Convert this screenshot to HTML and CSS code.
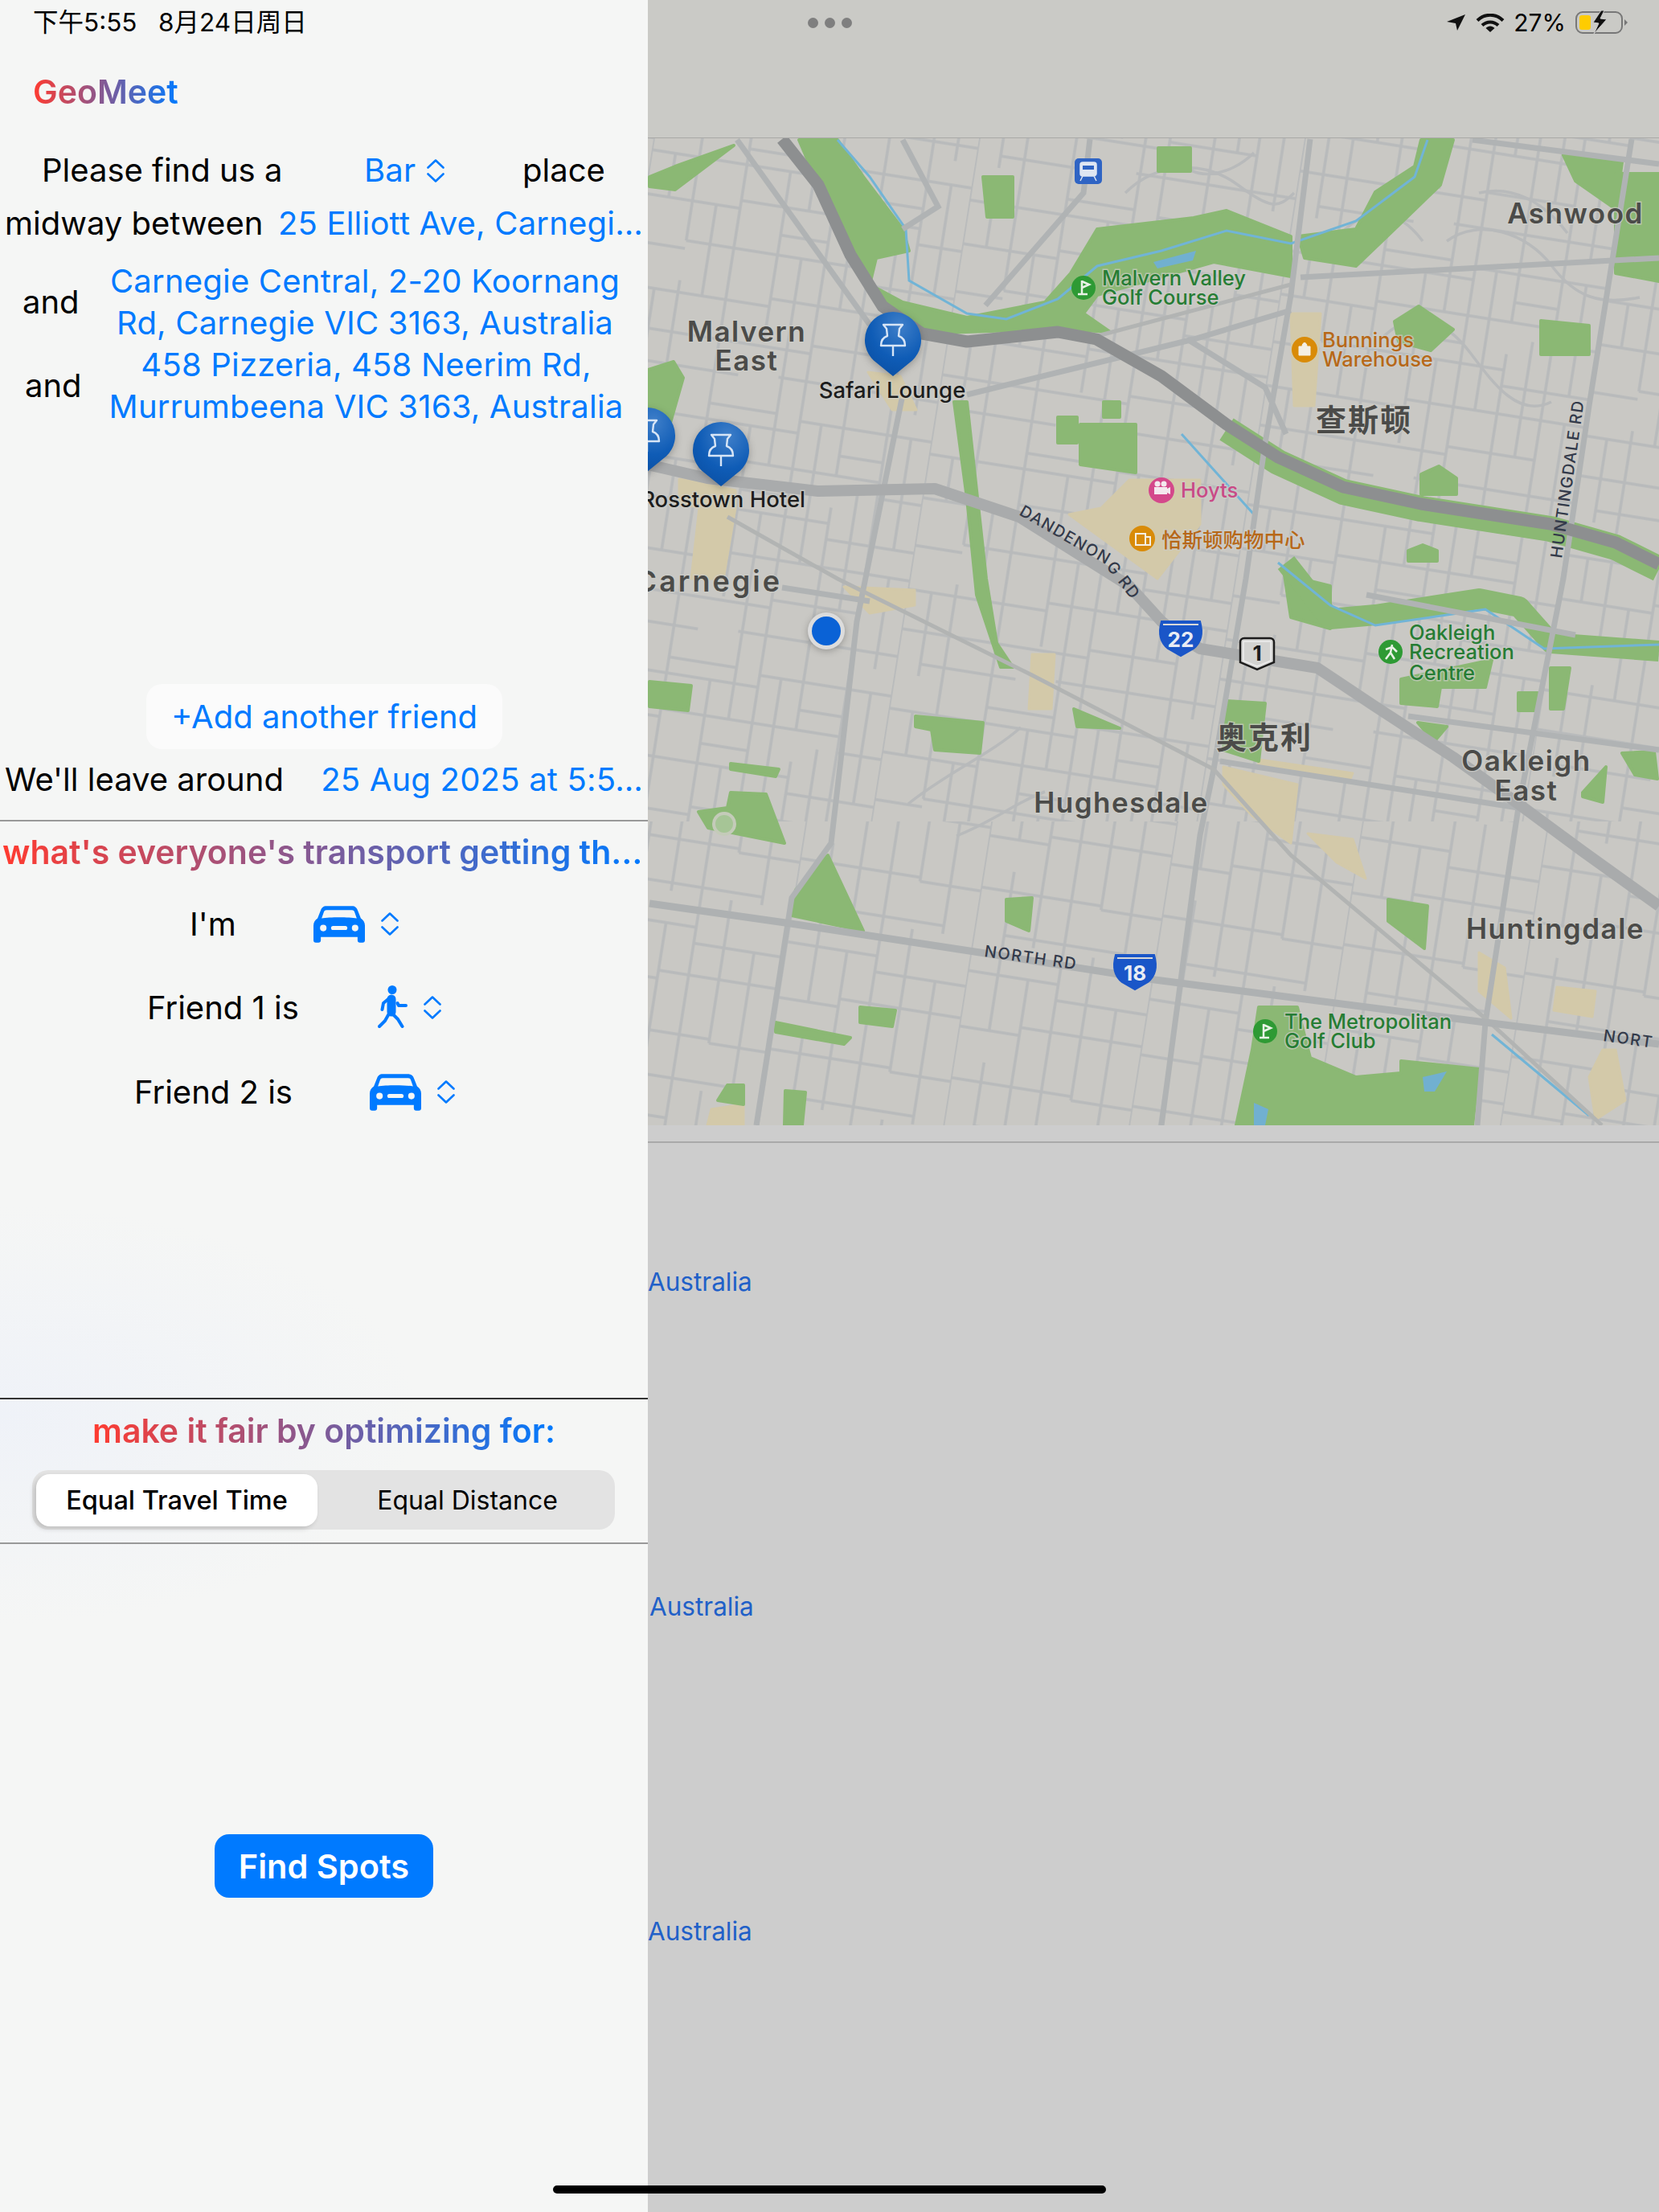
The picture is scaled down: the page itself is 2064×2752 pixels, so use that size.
FILE: index.html
```html
<!DOCTYPE html>
<html lang="en">
<head>
    <meta charset="UTF-8">
    <meta name="viewport" content="width=device-width, initial-scale=1.0">
    <title>GeoMeet</title>
    <link rel="stylesheet" href="styles.css">
</head>
<body>
    <svg class="sprites" width="0" height="0">
        <defs>
            <radialGradient id="pin-fill" cx="0.62" cy="0.22" r="0.85">
                <stop offset="0" stop-color="#3f7fc9"/>
                <stop offset="0.6" stop-color="#0f5cb6"/>
                <stop offset="1" stop-color="#0a4fa3"/>
            </radialGradient>
            <pattern id="street-tile" width="400" height="320" patternUnits="userSpaceOnUse" patternTransform="rotate(9) translate(30 12)">
                <path class="street" d="M0 0V320M120 0V320M235 0V320M345 0V320M60 0V150M60 200V320M175 45V260M290 0V90M290 130V320M30 45V100M30 215V320M90 100V215M205 0V90M205 150V320M262 30V205M320 110V255M375 30V170M375 205V320M0 45H235M235 30H400M0 100H120M120 90H345M345 110H400M0 160H60M60 150H290M290 170H400M0 215H175M175 205H400M0 265H235M235 255H345M30 305H150M200 300H400M120 25H205M290 65H345M175 125H235"/>
            </pattern>
            <pattern id="street-tile-south" width="228" height="240" patternUnits="userSpaceOnUse" patternTransform="rotate(9) translate(10 4)">
                <path class="street" d="M0 0V240M38 0V110M38 150V240M76 40V240M114 0V240M152 0V180M190 60V240M0 40H114M114 60H228M0 110H76M76 100H228M0 175H152M152 180H228M38 230H190"/>
            </pattern>
            <symbol id="chevrons" viewBox="0 0 22 29">
                <path d="M1.5 10.5 11 1.5l9.5 9M1.5 18.5l9.5 9 9.5-9" fill="none" stroke="#007aff" stroke-width="2.6" stroke-linecap="round" stroke-linejoin="round"/>
            </symbol>
            <symbol id="car" viewBox="0 0 63 46">
                <path fill="#007aff" fill-rule="evenodd" d="M16 1H47C51 1 53 3 54 6L58 16C61 18 63 21 63 25V43C63 45 62 46 60 46H57C55 46 54 45 54 43V39H9V43C9 45 8 46 6 46H3C1 46 0 45 0 43V25C0 21 2 18 5 16L9 6C10 3 12 1 16 1ZM16 6C14 6 13 7 12.500 9L10 16C20 14.500 43 14.500 53 16L50.500 9C50 7 49 6 47 6ZM12 24A4 4 0 1 0 12 32A4 4 0 1 0 12 24ZM51 24A4 4 0 1 0 51 32A4 4 0 1 0 51 24ZM24 25.500A2.500 2.500 0 0 0 24 30.500H39A2.500 2.500 0 0 0 39 25.500Z"/>
            </symbol>
            <symbol id="walk" viewBox="0 0 37 54">
                <circle cx="18" cy="5.500" r="5.500" fill="#007aff"/>
                <path d="M17 17V33" stroke="#007aff" stroke-width="11" stroke-linecap="round"/>
                <path d="M13 17 7 22 5.500 30M24.500 22 26 25H35M14 35 9 44 2 51M19 36 25 42 30.500 51" fill="none" stroke="#007aff" stroke-width="4" stroke-linecap="round" stroke-linejoin="round"/>
            </symbol>
            <symbol id="pin" viewBox="-40 -40 80 90" overflow="visible">
                <path fill="url(#pin-fill)" d="M0-35A35 35 0 0 1 24 25.500L0 45-24 25.500A35 35 0 0 1 0-35Z"/>
                <path fill="none" stroke="#d7e5f6" stroke-width="2.400" stroke-linejoin="round" d="M-12-19H12L8-14 7-5C13-3 15 2 15 7H-15C-15 2-13-3-7-5L-8-14ZM0 7V20"/>
            </symbol>
        </defs>
    </svg>

    <div class="screen">
        <aside class="sidebar">
            <div class="status-time">下午5:55&nbsp;&nbsp;&nbsp;8月24日周日</div>
            <h1 class="app-title"><span class="grad">GeoMeet</span></h1>

            <div class="row row-find">
                <span class="find-label">Please find us a</span>
                <span class="link find-pick">Bar <svg class="chev"><use href="#chevrons"/></svg></span>
                <span class="find-place">place</span>
            </div>
            <div class="row row-midway">
                <span>midway between</span>
                <span class="link">25 Elliott Ave, Carnegi…</span>
            </div>
            <div class="row row-friend row-friend-a">
                <span class="and">and</span>
                <span class="link addr">Carnegie Central, 2-20 Koornang<br>Rd, Carnegie VIC 3163, Australia</span>
            </div>
            <div class="row row-friend row-friend-b">
                <span class="and">and</span>
                <span class="link addr">458 Pizzeria, 458 Neerim Rd,<br>Murrumbeena VIC 3163, Australia</span>
            </div>

            <button class="add-friend">+Add another friend</button>

            <div class="row row-leave">
                <span>We'll leave around</span>
                <span class="link">25 Aug 2025 at 5:5…</span>
            </div>

            <hr class="rule rule-top">
            <h2 class="transport-title"><span class="grad">what's everyone's transport getting th…</span></h2>

            <div class="mode mode-me">
                <span class="mode-label">I'm</span>
                <svg class="icon-car"><use href="#car"/></svg>
                <svg class="chev"><use href="#chevrons"/></svg>
            </div>
            <div class="mode mode-one">
                <span class="mode-label">Friend 1 is</span>
                <svg class="icon-walk"><use href="#walk"/></svg>
                <svg class="chev"><use href="#chevrons"/></svg>
            </div>
            <div class="mode mode-two">
                <span class="mode-label">Friend 2 is</span>
                <svg class="icon-car"><use href="#car"/></svg>
                <svg class="chev"><use href="#chevrons"/></svg>
            </div>

            <hr class="rule rule-dark">
            <h2 class="fair-title"><span class="grad">make it fair by optimizing for:</span></h2>
            <div class="segments">
                <div class="segment segment-on">Equal Travel Time</div>
                <div class="segment segment-off">Equal Distance</div>
            </div>
            <hr class="rule rule-bottom">

            <button class="find-spots">Find Spots</button>
        </aside>

        <main class="detail">
            <div class="detail-top">
                <div class="detail-status">
                    <div class="dots"><i></i><i></i><i></i></div>
                    <div class="sys-icons">
                        <svg class="sys-arrow" viewBox="0 0 23 20"><path d="M0 9 23 0 13 20 11 11Z"/></svg>
                        <svg class="sys-wifi" viewBox="0 0 36 23"><path d="M2 8.500C11-.500 25-.500 34 8.500M8 14.500C13.500 9 22.500 9 28 14.500" fill="none" stroke="#111" stroke-width="4"/><path d="M12.500 18C15.500 14.500 20.500 14.500 23.500 18L18 23Z" fill="#111"/></svg>
                        <span class="sys-battery-pct">27%</span>
                        <svg class="sys-battery" viewBox="0 0 66 30">
                            <rect x="1" y="2" width="57" height="26" rx="8" fill="none" stroke="#777" stroke-width="2"/>
                            <rect x="5" y="6" width="14" height="18" rx="3" fill="#ffcc00"/>
                            <path d="M61 11 65 15 61 19Z" fill="#777"/>
                            <path d="M32 0 22 15 29 16 23 29 39 11 31 10 36 0Z" fill="#111" stroke="#ccc" stroke-width="1"/>
                        </svg>
                    </div>
                </div>
            </div>

            <svg class="map" viewBox="806 172 1258 1228">
                <rect class="land" x="806" y="172" width="1258" height="1228"/>
                <rect x="806" y="172" width="1258" height="850" fill="url(#street-tile)"/>
                <rect x="806" y="1022" width="1258" height="378" fill="url(#street-tile-south)"/>
                <path class="street" d="M1720 420C1760 380 1800 400 1830 440S1890 520 1930 500M1800 300C1840 270 1900 290 1930 330S1990 380 2040 370M1660 300C1700 250 1740 260 1770 300M1400 240C1440 200 1500 200 1540 230S1590 260 1610 240M1460 190C1480 230 1530 220 1560 190M1840 240C1880 230 1920 250 1950 290M1130 1000C1180 960 1230 940 1270 905M1190 1040C1240 1020 1260 1000 1300 985"/>

                <!-- shopping areas -->
                <g class="beige">
                    <path d="M1405 597H1493V652L1440 720 1330 640 1370 632Z"/>
                    <path d="M1606 390H1643L1635 505H1610Z"/>
                    <path d="M845 596 915 610 915 632 900 720H860L870 632 845 625Z"/>
                    <path d="M1050 730 1138 734V753L1082 763Z"/>
                    <path d="M1522 954 1614 976 1606 1049 1558 1015 1522 976Z"/>
                    <path d="M1566 945 1683 962 1679 971 1566 955Z"/>
                    <path d="M1284 814H1312L1308 882H1280Z"/>
                    <path d="M1627 1037 1683 1044 1699 1093 1663 1073Z"/>
                    <path d="M1840 1185 1872 1204 1880 1267 1840 1233Z"/>
                    <path d="M1937 1228 1985 1233 1981 1265 1933 1257Z"/>
                    <path d="M1994 1306H2010L2022 1369 1985 1393 1977 1340Z"/>
                    <path d="M885 1380 925 1374V1400H880Z"/>
                    <path d="M1080 463 1120 468 1140 510H1110Z"/>
                </g>

                <!-- parks -->
                <g class="park">
                    <path d="M994 174H1042L1074 220 1123 285 1131 312 1090 321 1082 354 1123 376 1203 395 1300 376 1332 340 1365 285 1485 271 1526 262 1606 294V344L1510 326 1365 367 1348 390 1381 413 1316 409 1147 415 1098 381 1058 317 1018 230Z"/>
                    <path d="M1615 294 1687 285 1711 239 1760 207 1768 174H1808L1792 230 1735 285 1687 331 1623 321Z"/>
                    <path d="M1441 184H1481V213H1441Z"/>
                    <path d="M1223 220H1260V270H1228Z"/>
                    <path d="M808 220 840 207 913 181 840 236 808 232Z"/>
                    <path d="M1945 193 2018 202 2010 260 1960 225Z"/>
                    <path d="M2010 216H2064V350L2010 340Z"/>
                    <path d="M1917 399 1977 405V441H1917Z"/>
                    <path d="M1735 400 1765 381 1808 410 1780 436 1740 425Z"/>
                    <path d="M1768 590 1790 580 1812 595V615H1768Z"/>
                    <path d="M1752 685 1770 678 1788 685V698H1752Z"/>
                    <path d="M1187 500H1203L1227 720 1240 800 1260 830 1245 830 1215 740 1203 620Z"/>
                    <path d="M1344 528H1413V588L1344 578Z"/>
                    <path d="M1373 500H1393V519H1373Z"/>
                    <path d="M1316 519H1340V551H1316Z"/>
                    <path d="M808 848 860 853 856 884 808 879Z"/>
                    <path d="M1139 891 1223 899 1219 937 1163 933 1159 908 1139 904Z"/>
                    <path d="M909 950 969 957 965 966 909 957Z"/>
                    <path d="M909 986 953 988 976 1049 881 1030 869 1010 905 1005Z"/>
                    <path d="M1030 1064 1074 1158 985 1139 990 1107Z"/>
                    <path d="M1252 1119 1284 1117 1280 1158 1252 1146Z"/>
                    <path d="M1727 1119 1776 1127 1772 1180 1727 1146Z"/>
                    <path d="M1566 1253H1614L1630 1316 1687 1340 1743 1335V1320L1840 1330 1832 1400H1538L1558 1306Z"/>
                    <path d="M1070 1253 1114 1257 1110 1277 1070 1272Z"/>
                    <path d="M965 1272 1058 1291 1050 1299 965 1284Z"/>
                    <path d="M905 1350H925V1374L893 1369Z"/>
                    <path d="M977 1357 1002 1359 998 1400H976Z"/>
                    <path d="M1526 872 1574 875 1566 947 1522 933Z"/>
                    <path d="M1598 715 1655 729V782L1606 768Z"/>
                    <path d="M1743 845 1856 821 1848 855 1792 855 1788 879 1743 875Z"/>
                    <path d="M1889 862H1913L1909 884H1889Z"/>
                    <path d="M1929 831H1953L1945 882H1929Z"/>
                    <path d="M2018 937 2058 935 2062 969 2034 964Z"/>
                    <path d="M1969 986 1998 954 1994 998 1969 991Z"/>
                    <path d="M1764 899 1800 904 1784 923Z"/>
                    <path d="M1336 882 1393 906 1340 904Z"/>
                    <path d="M806 460 838 450 850 470 830 540 806 530Z"/>
                </g>
                <path class="park-band" d="M1600 700 1655 770 1711 765 1840 745 1890 755 1930 800 2064 810"/>
                <path class="park-band park-band-freeway" d="M1526 534 1590 575 1671 612 1768 633 1929 658 2010 681 2064 708"/>
                <circle class="park-ring" cx="901" cy="1025" r="13"/>

                <!-- water -->
                <g class="water">
                    <path d="M1042 174 1082 220 1127 285 1131 349 1203 390 1252 397 1316 372 1365 331 1445 312 1526 287 1606 303 1687 275 1760 220 1776 174"/>
                    <path d="M1590 700 1655 753 1711 778 1848 758 1921 807 2064 802"/>
                    <path d="M1856 1287 1977 1388"/>
                    <path d="M1470 540 1560 640"/>
                </g>
                <path class="lake" d="M1435 326 1488 312 1484 324 1440 334Z"/>
                <path class="lake" d="M1770 1340 1800 1333 1785 1358 1772 1358Z"/>
                <path class="lake" d="M1560 1372 1578 1380 1574 1400H1560Z"/>

                <!-- collector roads -->
                <g class="collector">
                    <path d="M1122 496 1066 773 1034 1049 985 1117 941 1400"/>
                    <path d="M1630 173 1606 367 1574 551 1550 720 1510 957 1493 1039 1445 1400"/>
                    <path d="M2030 173 1977 505 1945 720 1889 1005 1848 1272 1838 1400"/>
                    <path d="M1518 947 1889 1005"/>
                    <path d="M1752 891 2064 933"/>
                    <path d="M1203 491 1485 422 1606 386"/>
                    <path d="M1477 422 1574 482 1600 540"/>
                    <path d="M1832 174 2064 204"/>
                    <path d="M917 174 1082 404"/>
                    <path d="M1123 174 1167 257 1123 285"/>
                    <path d="M973 731 1082 748"/>
                    <path d="M1356 173 1348 240 1226 380"/>
                    <path d="M1700 740 1960 790"/>
                    <path d="M1618 345 2064 321"/>
                </g>
                <g class="railway">
                    <path d="M905 643 1042 720 1284 840 1510 957 1606 1064 1848 1267 1993 1400"/>
                    <path d="M1365 418 1606 354"/>
                </g>
                <path class="north-road" d="M808 1124 977 1148 1219 1185 1437 1219 1848 1272 2064 1299"/>
                <path class="dandenong" d="M806 578 880 595 1018 611 1163 608 1268 643 1405 729 1445 773 1469 792 1493 807 1566 819 1639 831 1711 879 1808 942 1889 1000 1969 1059 2064 1127"/>
                <path class="freeway" d="M973 173 1018 230 1058 317 1098 381 1147 415 1203 425 1316 413 1364 422 1445 468 1526 528 1590 569 1671 606 1768 627 1929 652 2010 675 2064 702"/>

                <!-- place names -->
                <g class="suburb">
                    <text x="1960" y="278" text-anchor="middle">Ashwood</text>
                    <text x="929" y="425" text-anchor="middle">Malvern</text>
                    <text x="929" y="461" text-anchor="middle">East</text>
                    <text class="suburb-wide" x="973" y="736" text-anchor="end">Carnegie</text>
                    <text x="1395" y="1011" text-anchor="middle">Hughesdale</text>
                    <text x="1899" y="959" text-anchor="middle">Oakleigh</text>
                    <text x="1899" y="996" text-anchor="middle">East</text>
                    <text x="1935" y="1168" text-anchor="middle">Huntingdale</text>
                    <text class="suburb-cjk" x="1697" y="536" text-anchor="middle">查斯顿</text>
                    <text class="suburb-cjk" x="1573" y="931" text-anchor="middle">奥克利</text>
                </g>
                <g class="poi-green">
                    <text x="1371" y="355">Malvern Valley</text>
                    <text x="1371" y="379">Golf Course</text>
                    <text x="1753" y="796">Oakleigh</text>
                    <text x="1753" y="820">Recreation</text>
                    <text x="1753" y="846">Centre</text>
                    <text x="1598" y="1280">The Metropolitan</text>
                    <text x="1598" y="1304">Golf Club</text>
                </g>
                <g class="poi-orange">
                    <text x="1645" y="432">Bunnings</text>
                    <text x="1645" y="456">Warehouse</text>
                    <text x="1445" y="681">恰斯顿购物中心</text>
                </g>
                <text class="poi-pink" x="1469" y="619">Hoyts</text>
                <g class="road-name">
                    <text><textPath href="#dandenong-label">DANDENONG RD</textPath></text>
                    <text transform="translate(1943 695) rotate(-82)">HUNTINGDALE RD</text>
                    <text transform="translate(1224 1190) rotate(8)">NORTH RD</text>
                    <text transform="translate(1994 1295) rotate(8)">NORT</text>
                </g>
                <path id="dandenong-label" fill="none" d="M1267 640 1372 700 1425 768"/>

                <!-- poi badges -->
                <g class="badge-green">
                    <circle cx="1348" cy="358" r="15"/>
                    <circle cx="1730" cy="811" r="15"/>
                    <circle cx="1574" cy="1283" r="15"/>
                </g>
                <g class="badge-glyph">
                    <path d="M1346 349V365M1346 350 1355 354 1346 358M1341 366H1353"/>
                    <path d="M1572 1274V1290M1572 1275 1581 1279 1572 1283M1567 1291H1579"/>
                    <path d="M1732 802 1730 812 1724 820M1730 812 1735 820M1724 808 1732 805 1738 811"/>
                </g>
                <circle class="badge-orange" cx="1623" cy="435" r="16"/>
                <path d="M1616 431H1630V442H1616ZM1620 431C1620 425 1626 425 1626 431" fill="#f4efe4" stroke="#f4efe4" stroke-width="1"/>
                <circle class="badge-orange" cx="1421" cy="670" r="16"/>
                <path d="M1413 664H1425V678H1413ZM1425 668H1431V678H1425Z" fill="none" stroke="#f4efe4" stroke-width="2"/>
                <circle class="badge-pink" cx="1445" cy="610" r="16"/>
                <path d="M1436 606H1452V615H1436ZM1452 608 1456 606V615L1452 613Z" fill="#f4e8ee"/>
                <circle cx="1440" cy="602" r="3.500" fill="#f4e8ee"/>
                <circle cx="1448" cy="602" r="3.500" fill="#f4e8ee"/>

                <!-- station -->
                <rect x="1337" y="197" width="34" height="32" rx="5" fill="#2f64c4"/>
                <path d="M1347 202H1361C1363 202 1364 203 1364 205V216C1364 218 1362 219 1361 219H1347C1345 219 1344 218 1344 216V205C1344 203 1345 202 1347 202ZM1347 219 1344 225M1361 219 1364 225" fill="#dfe6f2" stroke="#dfe6f2" stroke-width="1.500"/>
                <rect x="1347" y="206" width="14" height="5" fill="#2f64c4"/>

                <!-- shields -->
                <g>
                    <path fill="#1a56c8" stroke="#1a56c8" stroke-width="2" d="M1445 773H1493C1497 787 1495 799 1485 807L1469 816 1453 807C1443 799 1441 787 1445 773Z"/>
                    <path d="M1447 777H1491" stroke="#d8d8d8" stroke-width="2"/>
                    <text class="shield-num" x="1469" y="805" text-anchor="middle">22</text>
                    <path fill="#1a56c8" stroke="#1a56c8" stroke-width="2" d="M1388 1188H1436C1440 1202 1438 1214 1428 1222L1412 1231 1396 1222C1386 1214 1384 1202 1388 1188Z"/>
                    <path d="M1390 1192H1434" stroke="#d8d8d8" stroke-width="2"/>
                    <text class="shield-num" x="1412" y="1220" text-anchor="middle">18</text>
                    <path fill="#d3d3d1" stroke="#1c1c1c" stroke-width="2.500" d="M1548 794H1580C1583 794 1585 796 1585 799V824L1564 833 1543 824V799C1543 796 1545 794 1548 794Z"/>
                    <path fill="none" stroke="#eee" stroke-width="1.500" d="M1547 798H1581V822L1564 829 1547 822Z"/>
                    <text class="shield-one" x="1564" y="822" text-anchor="middle">1</text>
                </g>

                <!-- location dot -->
                <circle class="here-ring" cx="1028" cy="785" r="23"/>
                <circle cx="1028" cy="785" r="18" fill="#0a62d6"/>

                <!-- pins -->
                <use class="pin" href="#pin" x="1071" y="383" width="80" height="90"/>
                <use class="pin" href="#pin" x="857" y="520" width="80" height="90"/>
                <use class="pin" href="#pin" x="765" y="502" width="80" height="90"/>
                <g class="pin-name">
                    <text x="1110" y="495" text-anchor="middle">Safari Lounge</text>
                    <text x="1002" y="631" text-anchor="end">Rosstown Hotel</text>
                </g>
            </svg>

            <div class="results">
                <hr class="results-rule">
                <p class="result-line">Australia</p>
                <p class="result-line result-line-shift">Australia</p>
                <p class="result-line">Australia</p>
            </div>
        </main>

        <div class="home-bar"></div>
    </div>
</body>
</html>
```

FILE: styles.css
```css
:root {
    --blue: #007aff;
    --red: #ff3b30;
    --ink: #000;
}
* {
    box-sizing: border-box;
}
body {
    margin: 0;
    font-family: "Inter", "Noto Sans CJK SC", sans-serif;
    color: var(--ink);
}
.sprites {
    position: absolute;
}
.screen {
    position: relative;
    display: flex;
    width: 2064px;
    height: 2752px;
    overflow: hidden;
}

/* left column */
.sidebar {
    position: relative;
    z-index: 2;
    flex: 0 0 806px;
    display: flex;
    flex-direction: column;
    background: radial-gradient(ellipse 520px 260px at 0 1760px, #eff2f8, rgba(240,243,249,0)), #f5f6f5;
    font-size: 40px;
}
.status-time {
    height: 56px;
    padding-left: 41px;
    font-size: 31.500px;
    line-height: 56px;
}
.app-title {
    height: 60px;
    margin: 28px 0 0 41px;
    font-size: 41px;
    font-weight: 600;
    line-height: 60px;
}
.grad {
    background: linear-gradient(90deg, var(--red), var(--blue));
    -webkit-background-clip: text;
    background-clip: text;
    color: transparent;
}
.link {
    color: var(--blue);
    letter-spacing: 0.2px;
}
.row {
    display: flex;
    align-items: center;
    white-space: nowrap;
    line-height: 52px;
}
.row-find {
    height: 52px;
    margin-top: 42px;
    padding-left: 52px;
}
.find-label {
    width: 401px;
}
.find-pick {
    display: flex;
    align-items: center;
    gap: 14px;
    width: 197px;
}
.row-midway {
    justify-content: space-between;
    height: 52px;
    margin-top: 14px;
    padding: 0 6px;
}
.row-friend {
    height: 104px;
}
.row-friend-a {
    margin-top: 20px;
    padding-left: 28px;
}
.row-friend-b {
    padding-left: 31px;
}
.and {
    width: 74px;
}
.addr {
    flex: 1;
    text-align: center;
}
.add-friend {
    align-self: flex-start;
    width: 443px;
    height: 81px;
    margin: 319px 0 0 182px;
    border: none;
    border-radius: 20px;
    background-color: #fbfbfb;
    color: var(--blue);
    font: inherit;
}
.row-leave {
    justify-content: space-between;
    height: 52px;
    margin-top: 12px;
    padding: 0 6px;
}
.rule {
    width: 100%;
    margin: 0;
    border: none;
    background-color: #999;
    height: 2px;
}
.rule-top {
    margin-top: 24px;
}
.transport-title {
    height: 52px;
    margin: 12px 0 0;
    padding-left: 3px;
    font-size: 41px;
    font-weight: 600;
    line-height: 52px;
    white-space: nowrap;
}
.mode {
    display: flex;
    align-items: center;
    height: 52px;
}
.mode-me {
    margin-top: 37px;
    padding-left: 236px;
}
.mode-me .mode-label {
    width: 154px;
}
.mode-one {
    margin-top: 52px;
    padding-left: 183px;
}
.mode-one .mode-label {
    width: 287px;
}
.mode-two {
    margin-top: 53px;
    padding-left: 167px;
}
.mode-two .mode-label {
    width: 293px;
}
.icon-car {
    width: 64px;
    height: 47px;
}
.icon-walk {
    width: 37px;
    height: 54px;
}
.chev {
    width: 22px;
    height: 29px;
    flex-shrink: 0;
}
.mode .chev {
    margin-left: 20px;
}
.rule-dark {
    margin-top: 355px;
    background-color: #333;
}
.fair-title {
    height: 52px;
    margin: 13px 0 0;
    font-size: 41px;
    font-weight: 600;
    line-height: 52px;
    text-align: center;
}
.segments {
    display: flex;
    align-items: center;
    width: 725px;
    height: 74px;
    margin: 23px 0 0 40px;
    padding: 0 5px;
    border-radius: 20px;
    background-color: #e3e3e3;
}
.segment {
    flex: 1;
    font-size: 32px;
    text-align: center;
}
.segment-off {
    padding-left: 8px;
}
.segment-on {
    flex: 0 0 350px;
    height: 65px;
    border-radius: 17px;
    background-color: #fff;
    box-shadow: -3px 3px 6px rgba(0,0,0,0.16);
    font-size: 32.500px;
    font-weight: 500;
    line-height: 65px;
}
.rule-bottom {
    margin-top: 16px;
}
.find-spots {
    align-self: flex-start;
    width: 272px;
    height: 79px;
    margin: 361px 0 0 267px;
    border: none;
    border-radius: 18px;
    background-color: var(--blue);
    color: #fff;
    font: inherit;
    font-size: 41.500px;
    font-weight: 600;
}

/* right column, dimmed */
.detail {
    flex: 1;
    display: flex;
    flex-direction: column;
    background-color: #cdcdcd;
}
.detail-top {
    height: 172px;
    background-color: #cacac6;
    border-bottom: 1px solid #a9a9a7;
}
.detail-status {
    display: flex;
    justify-content: space-between;
    align-items: center;
    height: 56px;
    padding: 0 38px 0 199px;
}
.dots {
    display: flex;
    gap: 8px;
}
.dots i {
    width: 13px;
    height: 13px;
    border-radius: 50%;
    background-color: #7f7f7f;
}
.sys-icons {
    display: flex;
    align-items: center;
}
.sys-arrow {
    width: 23px;
    height: 20px;
    fill: #111;
}
.sys-wifi {
    width: 36px;
    height: 23px;
    margin-left: 13px;
}
.sys-battery-pct {
    margin: 0 12px 0 11px;
    font-size: 30px;
}
.sys-battery {
    width: 66px;
    height: 30px;
}
.map {
    display: block;
    width: 1258px;
    height: 1228px;
    flex-shrink: 0;
}
.land { fill: #c9c8c4; }
.street {
    fill: none;
    stroke: #b8babb;
    stroke-width: 3.500;
}
.beige {
    fill: #d3c9a9;
    stroke: #d3c9a9;
    stroke-width: 3;
    stroke-linejoin: round;
}
.park {
    fill: #8bb874;
    stroke: #8bb874;
    stroke-width: 4;
    stroke-linejoin: round;
}
.park-band {
    fill: none;
    stroke: #8bb874;
    stroke-width: 26;
    stroke-linejoin: round;
}
.park-band-freeway {
    stroke-width: 32;
}
.park-ring {
    fill: #a6c596;
    stroke: #c4cbb9;
    stroke-width: 4;
}
.water {
    fill: none;
    stroke: #71b4d6;
    stroke-width: 3;
}
.lake { fill: #71b0d0; }
.collector {
    fill: none;
    stroke: #b0b3b4;
    stroke-width: 7;
}
.railway {
    fill: none;
    stroke: #b2b4b3;
    stroke-width: 5;
}
.north-road {
    fill: none;
    stroke: #aeb1b2;
    stroke-width: 9;
}
.dandenong {
    fill: none;
    stroke: #a9abac;
    stroke-width: 14;
    stroke-linejoin: round;
}
.freeway {
    fill: none;
    stroke: #8d8f90;
    stroke-width: 15;
    stroke-linejoin: round;
}
.suburb text {
    fill: #4b4b49;
    font-size: 35px;
    font-weight: 600;
    letter-spacing: 1.500px;
    paint-order: stroke;
    stroke: rgba(205,205,200,0.7);
    stroke-width: 3px;
}
.suburb .suburb-wide {
    font-size: 36px;
    letter-spacing: 3px;
}
.suburb .suburb-cjk {
    font-size: 38px;
    letter-spacing: 2px;
}
.poi-green text,
.poi-orange text,
.poi-pink,
.pin-name text {
    font-size: 25.500px;
    font-weight: 500;
    paint-order: stroke;
    stroke: rgba(205,205,200,0.7);
    stroke-width: 3px;
}
.poi-green text { fill: #267d34; }
.poi-orange text { fill: #b76818; }
.poi-pink { fill: #c94a86; }
.pin-name text {
    fill: #1d1d1d;
    font-size: 27.500px;
}
.road-name text {
    fill: #333a4a;
    font-size: 20px;
    font-weight: 500;
    letter-spacing: 1.500px;
}
.badge-green { fill: #2e9a34; }
.badge-glyph {
    fill: none;
    stroke: #e9f2e6;
    stroke-width: 2.500;
}
.badge-orange { fill: #d98b08; }
.badge-pink { fill: #d4488b; }
.shield-num {
    fill: #e8ecf4;
    font-size: 26px;
    font-weight: 700;
}
.shield-one {
    fill: #1c1c1c;
    font-size: 26px;
    font-weight: 700;
}
.here-ring {
    fill: #dcdcdc;
    filter: drop-shadow(0 2px 4px rgba(0,0,0,0.25));
}
.pin {
    filter: drop-shadow(0 3px 5px rgba(0,0,0,0.25));
}
.results {
    flex: 1;
}
.results-rule {
    margin: 20px 0 0;
    height: 2px;
    border: none;
    background-color: #a9a9a9;
}
.result-line {
    margin: 0;
    height: 40px;
    color: #2160c8;
    font-size: 31.500px;
    line-height: 40px;
}
.result-line:first-of-type {
    margin-top: 153px;
}
.result-line + .result-line {
    margin-top: 364px;
}
.result-line-shift {
    padding-left: 2px;
}
.home-bar {
    position: absolute;
    z-index: 3;
    left: 688px;
    top: 2719px;
    width: 688px;
    height: 10px;
    border-radius: 5px;
    background-color: #000;
}
```
